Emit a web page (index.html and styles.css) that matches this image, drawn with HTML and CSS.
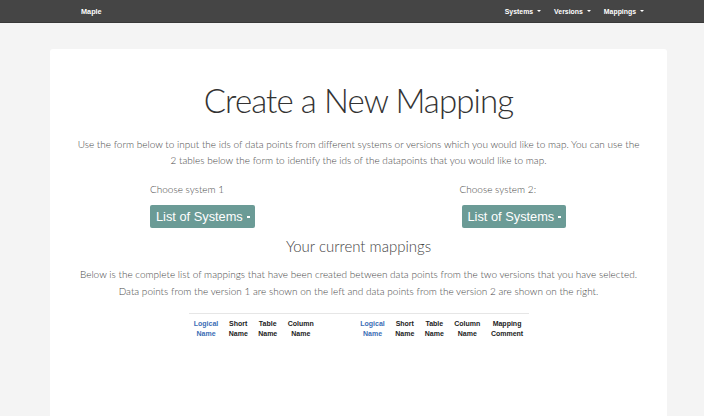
FILE: index.html
```html
<!DOCTYPE html>
<html>
<head>
<meta charset="utf-8">
<link rel="stylesheet" href="styles.css">
</head>
<body>
<nav class="navbar">
  <a class="brand" href="#">Maple</a>
  <ul class="nav">
    <li><a href="#">Systems <span class="caret"></span></a></li>
    <li><a href="#">Versions <span class="caret"></span></a></li>
    <li><a href="#">Mappings <span class="caret"></span></a></li>
  </ul>
</nav>
<main class="card">
  <h1 class="title">Create a New Mapping</h1>
  <p class="lead">Use the form below to input the ids of data points from different systems or versions which you would like to map. You can use the<br>2 tables below the form to identify the ids of the datapoints that you would like to map.</p>
  <div class="choose">
    <div class="choice">
      <label class="choice-label">Choose system 1</label>
      <button class="btn">List of Systems <span class="btn-caret"></span></button>
    </div>
    <div class="choice choice-right">
      <label class="choice-label">Choose system 2:</label>
      <button class="btn">List of Systems <span class="btn-caret"></span></button>
    </div>
  </div>
  <h2 class="subtitle">Your current mappings</h2>
  <p class="desc">Below is the complete list of mappings that have been created between data points from the two versions that you have selected.<br>Data points from the version 1 are shown on the left and data points from the version 2 are shown on the right.</p>
  <table class="map-table">
    <thead>
      <tr>
        <th class="link">Logical<br>Name</th>
        <th>Short<br>Name</th>
        <th>Table<br>Name</th>
        <th>Column<br>Name</th>
        <th class="gap"></th>
        <th class="link">Logical<br>Name</th>
        <th>Short<br>Name</th>
        <th>Table<br>Name</th>
        <th>Column<br>Name</th>
        <th>Mapping<br>Comment</th>
      </tr>
    </thead>
  </table>
</main>
</body>
</html>
```
FILE: styles.css
```css
html, body {
  margin: 0;
  padding: 0;
}
body {
  background: #f4f4f4;
  font-family: "Lato", "Liberation Sans", sans-serif;
  width: 704px;
  height: 416px;
  overflow: hidden;
}
.navbar {
  height: 23px;
  background: #454545;
  border-bottom: 1px solid #383838;
  display: flex;
  align-items: center;
  justify-content: space-between;
  padding: 0 60px 0 81px;
  box-sizing: border-box;
}
.brand {
  color: #fff;
  font-family: "Liberation Sans", sans-serif;
  font-weight: bold;
  font-size: 7.3px;
  text-decoration: none;
}
.nav {
  list-style: none;
  margin: 0;
  padding: 0;
  display: flex;
  gap: 13px;
}
.nav a {
  color: #fff;
  font-family: "Liberation Sans", sans-serif;
  font-weight: bold;
  font-size: 6.9px;
  text-decoration: none;
  display: flex;
  align-items: center;
  gap: 4px;
}
.caret {
  display: inline-block;
  width: 0;
  height: 0;
  border-left: 2.5px solid transparent;
  border-right: 2.5px solid transparent;
  border-top: 2.5px solid #fff;
}
.card {
  display: block;
  margin: 26px 0 0 50px;
  width: 617px;
  height: 367px;
  background: #fff;
  border-radius: 3px 3px 0 0;
  box-sizing: border-box;
  padding-top: 30px;
  text-align: center;
}
.title {
  margin: 0;
  font-weight: 300;
  font-size: 33px;
  letter-spacing: -0.9px;
  line-height: 42px;
  color: #333;
}
.lead {
  margin: 15px 0 0;
  font-weight: 300;
  font-size: 10px;
  line-height: 16px;
  color: #4a4a4a;
}
.choose {
  display: grid;
  grid-template-columns: 1fr 1fr;
  margin-top: 14px;
  text-align: left;
}
.choice {
  padding-left: 100px;
  display: flex;
  flex-direction: column;
  align-items: flex-start;
}
.choice-right {
  padding-left: 103px;
}
.choice-label {
  font-weight: 300;
  font-size: 10px;
  line-height: 14px;
  color: #4a4a4a;
}
.choice-right .choice-label {
  margin-left: -2px;
}
.btn {
  margin-top: 9px;
  height: 23px;
  padding: 0 5px 0 6px;
  border: none;
  border-radius: 2px;
  background: #6b9b96;
  color: #fff;
  font-family: "Liberation Sans", sans-serif;
  font-size: 12.8px;
  display: flex;
  align-items: center;
  gap: 4px;
}
.btn-caret {
  display: inline-block;
  width: 3px;
  height: 1.5px;
  background: #fff;
  margin-top: 1px;
}
.subtitle {
  margin: 8px 0 0;
  font-weight: 300;
  font-size: 15px;
  line-height: 20px;
  color: #444;
}
.desc {
  margin: 10px 0 0;
  font-weight: 300;
  font-size: 10px;
  line-height: 17px;
  color: #4a4a4a;
}
.map-table {
  margin: 13px auto 0;
  border-collapse: collapse;
  border-top: 1px solid #e6e6e6;
  width: 340px;
}
.map-table th {
  font-family: "Liberation Sans", sans-serif;
  font-weight: bold;
  font-size: 7px;
  line-height: 10px;
  color: #222;
  padding: 5px 5px 4px;
  text-align: center;
}
.map-table th.link {
  color: #3b6db5;
}
.map-table th.gap {
  width: 26px;
}
```
